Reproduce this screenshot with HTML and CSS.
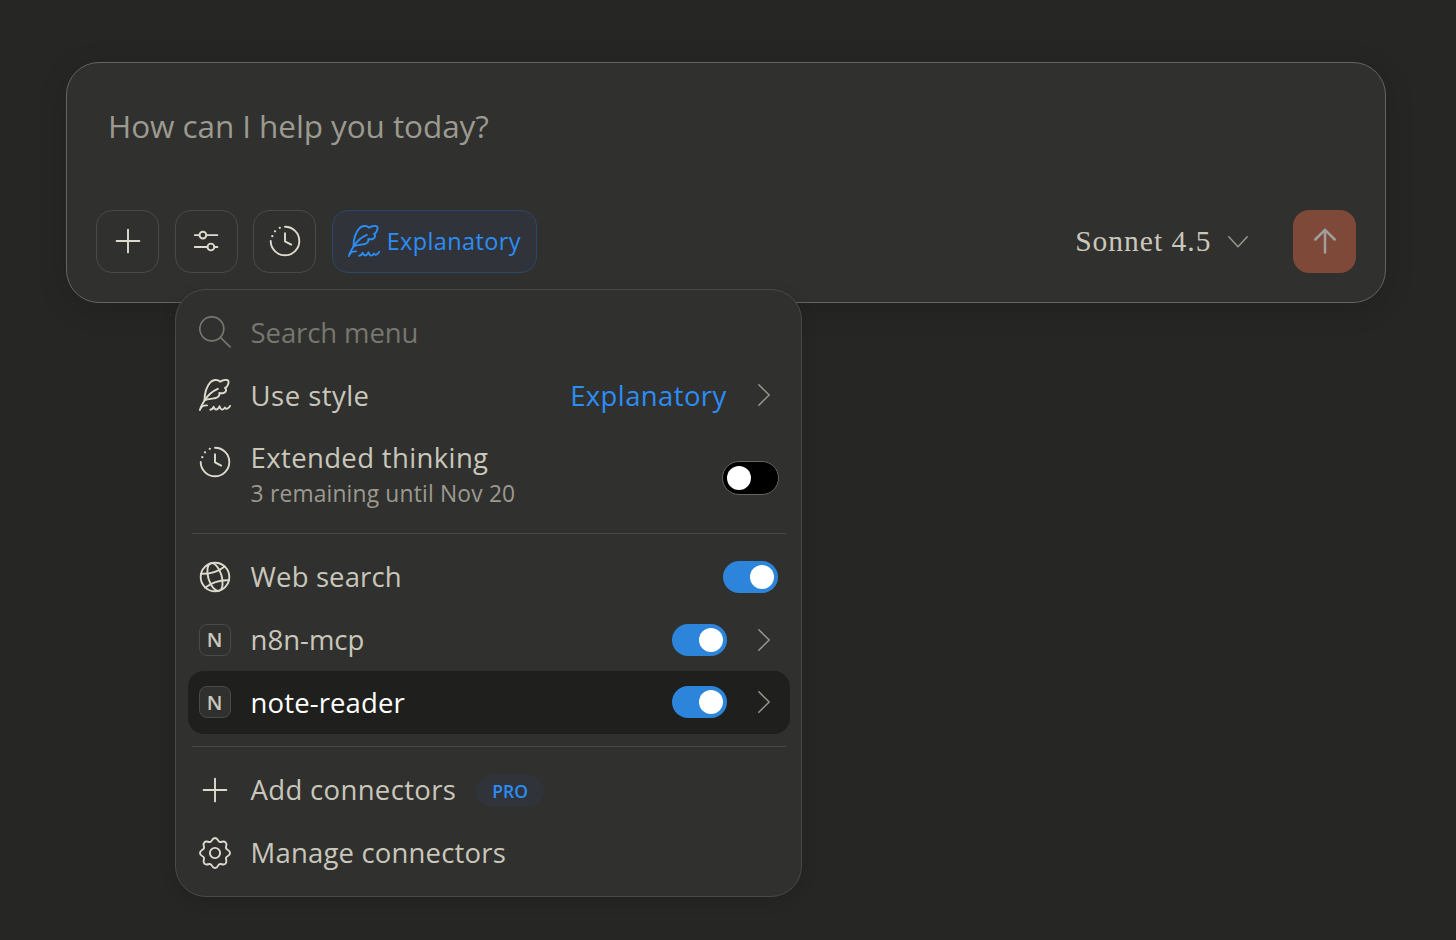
FILE: index.html
```
<!DOCTYPE html>
<html lang="en">
<head>
  <meta charset="UTF-8" />
  <meta name="viewport" content="width=device-width, initial-scale=1" />
  <title>New chat</title>
  <link rel="stylesheet" href="styles.css">
</head>
<body>
  <!-- icon sprite -->
  <svg class="sprite" width="0" height="0">
    <symbol id="i-plus" viewBox="0 0 32 32"><path d="M16 4.6v22.8M4.6 16h22.8" /></symbol>
    <symbol id="i-sliders" viewBox="0 0 32 32">
      <path d="M4.8 10.1h4.6M16.4 10.1h11M4.8 22h12.6M24.4 22h3" />
      <circle cx="12.9" cy="10.1" r="3.4" /><circle cx="20.9" cy="22" r="3.4" />
    </symbol>
    <symbol id="i-clock" viewBox="0 0 32 32">
      <path d="M16 1.7A14.3 14.3 0 1 1 1.7 16M16 8.2v8.2l6.2 3.2" />
      <path class="dots" d="M3.3 11.2h.01M6 6.3h.01M10.8 2.8h.01" />
    </symbol>
    <symbol id="i-feather" viewBox="0 0 32 32">
      <path d="M.9 31C2 27.5 3.500 24.500 5.500 21.500C8.500 16.500 13 12.300 18.800 9.800" />
      <path d="M5.500 21.300C5.600 14.500 7.500 7.500 11.300 3.300C13.500.9 18.500-.1 21 2.700C23 1.600 25.500.6 28 1C30.500 1.500 29.500 4.200 28.800 6C28.200 7.700 27.300 8.600 26 9C28 10.500 27 13.500 24.500 14C23 14.400 21.500 14.300 20.300 14C21 16.500 19 18.500 16 19.200C13 20.100 9 19.600 5.500 21.300" />
      <path d="M1.700 29C3 26.800 5.500 26.200 8 26.400M11.300 30.700C13.700 30.500 14 29.600 14.700 27.800C15.600 31.300 18.500 31.700 20.500 27.300C21.800 31.500 24.200 31.500 26 28.600C27 30.500 29.500 30 31.100 26.900" />
    </symbol>
    <symbol id="i-search" viewBox="0 0 32 32"><circle cx="12.800" cy="12.800" r="12" /><path d="M21.500 21.500l9.600 9.400" /></symbol>
    <symbol id="i-globe" viewBox="0 0 32 32">
      <circle cx="16" cy="16" r="14.300" />
      <g transform="rotate(-17 16 16)">
        <ellipse cx="16" cy="16" rx="6.700" ry="14.300" />
        <path d="M3.600 8.700Q16 13.300 28.400 8.700M3.600 23.300Q16 18.700 28.400 23.300" />
      </g>
    </symbol>
    <symbol id="i-gear" viewBox="-16 -16 32 32">
      <path d="M0-15C3.200-15 2.560-11.930 4.590-11.090C6.620-10.250 8.340-12.860 10.600-10.600C12.860-8.340 10.250-6.620 11.090-4.590C11.930-2.560 15-3.200 15 0C15 3.200 11.930 2.560 11.090 4.590C10.250 6.620 12.860 8.340 10.600 10.600C8.340 12.860 6.620 10.250 4.590 11.090C2.560 11.930 3.200 15 0 15C-3.200 15-2.560 11.930-4.590 11.090C-6.620 10.250-8.340 12.860-10.600 10.600C-12.860 8.340-10.250 6.620-11.090 4.590C-11.930 2.560-15 3.200-15 0C-15-3.200-11.930-2.560-11.090-4.590C-10.250-6.620-12.860-8.340-10.600-10.600C-8.340-12.860-6.620-10.250-4.590-11.090C-2.560-11.930-3.200-15 0-15Z" />
      <circle r="5.100" />
    </symbol>
    <symbol id="i-right" viewBox="0 0 12 22"><path d="M.8.8L11.200 11L.8 21.200" /></symbol>
    <symbol id="i-down" viewBox="0 0 20 12"><path d="M.8.800L10 10.800L19.200.8" /></symbol>
    <symbol id="i-up" viewBox="0 0 24 26"><path d="M12 24.500V1.800M2.300 11.500L12 1.800L21.700 11.500" /></symbol>
  </svg>

  <main class="composer">
    <div class="prompt"><span class="t-prompt">How can I help you today?</span></div>

    <div class="toolbar">
      <button class="tool"><svg class="icon"><use href="#i-plus" /></svg></button>

      <div class="tool-wrap">
        <button class="tool"><svg class="icon"><use href="#i-sliders" /></svg></button>

        <div class="menu">
          <div class="row search">
            <svg class="icon thin"><use href="#i-search" /></svg>
            <span class="label t-search">Search menu</span>
          </div>
          <div class="row">
            <svg class="icon"><use href="#i-feather" /></svg>
            <span class="label t-use">Use style</span>
            <span class="value">Explanatory</span>
            <svg class="chevron"><use href="#i-right" /></svg>
          </div>
          <div class="row tall">
            <svg class="icon"><use href="#i-clock" /></svg>
            <div class="label">
              <div class="t-extended">Extended thinking</div>
              <div class="hint">3 remaining until Nov 20</div>
            </div>
            <span class="toggle off"></span>
          </div>

          <hr>

          <div class="row">
            <svg class="icon"><use href="#i-globe" /></svg>
            <span class="label t-web">Web search</span>
            <span class="toggle"></span>
          </div>
          <div class="row">
            <span class="badge">N</span>
            <span class="label">n8n-mcp</span>
            <span class="toggle"></span>
            <svg class="chevron"><use href="#i-right" /></svg>
          </div>
          <div class="row active">
            <span class="badge">N</span>
            <span class="label t-note">note-reader</span>
            <span class="toggle"></span>
            <svg class="chevron"><use href="#i-right" /></svg>
          </div>

          <hr>

          <div class="row">
            <svg class="icon"><use href="#i-plus" /></svg>
            <span class="t-add">Add connectors</span>
            <span class="pro">PRO</span>
          </div>
          <div class="row">
            <svg class="icon"><use href="#i-gear" /></svg>
            <span class="label t-manage">Manage connectors</span>
          </div>
        </div>
      </div>

      <button class="tool"><svg class="icon"><use href="#i-clock" /></svg></button>
      <button class="tool style-pill"><svg class="icon"><use href="#i-feather" /></svg><span>Explanatory</span></button>

      <div class="model"><span>Sonnet 4.5</span><svg><use href="#i-down" /></svg></div>
      <button class="send"><svg><use href="#i-up" /></svg></button>
    </div>
  </main>
</body>
</html>
```

FILE: styles.css
```
* {
  box-sizing: border-box;
}
body {
  margin: 0;
  height: 940px;
  padding: 62px 70px 0 66px;
  overflow: hidden;
  background: #262624;
  color: #c9c7bb;
  font-family: 'Open Sans', 'Noto Sans', sans-serif;
  font-size: 27.5px;
}
button {
  margin: 0;
  padding: 0;
  background: none;
  color: inherit;
  font: inherit;
}
svg {
  display: block;
  flex: none;
  fill: none;
  stroke: currentColor;
  stroke-linecap: round;
  stroke-linejoin: round;
}
.sprite {
  position: absolute;
}
.composer {
  height: 241px;
  padding: 0 29px;
  background: #30302e;
  border: 1px solid #65645f;
  border-radius: 33px;
  box-shadow: 0 6px 30px rgba(0,0,0,0.14);
}
.prompt {
  height: 147px;
  padding: 41px 12px 0;
  color: #9c9a90;
  font-size: 31.5px;
  line-height: 44px;
  letter-spacing: -0.08px;
  white-space: nowrap;
}

/* toolbar */
.toolbar {
  display: flex;
  align-items: center;
  gap: 15.6px;
}
.tool {
  display: flex;
  align-items: center;
  justify-content: center;
  width: 63px;
  height: 63px;
  padding-bottom: 1px;
  border: 1px solid #4b4a47;
  border-radius: 16px;
  color: #e3e0d3;
}
.tool-wrap {
  position: relative;
}
.icon {
  width: 32px;
  height: 32px;
  color: #dedbce;
  stroke-width: 1.9;
}
.icon.thin {
  color: inherit;
  stroke-width: 1.7;
}
.dots {
  stroke-width: 2.3;
}
.style-pill {
  width: 205px;
  gap: 7px;
  background: #30343a;
  border-color: #2d4767;
  color: #2b8df5;
  font-size: 23.5px;
  letter-spacing: 0.38px;
}
.style-pill .icon {
  color: inherit;
}
.model {
  display: flex;
  align-items: center;
  gap: 17px;
  margin-left: auto;
  margin-right: 29px;
  font-family: 'Liberation Serif', serif;
  font-size: 29.5px;
  letter-spacing: 1px;
}
.model svg {
  width: 20px;
  height: 12px;
  color: #97958c;
  stroke-width: 1.5;
}
.send {
  display: flex;
  align-items: center;
  justify-content: center;
  width: 63px;
  height: 63px;
  border: 0;
  border-radius: 16px;
  background: #7e4939;
  color: #a09f9d;
}
.send svg {
  width: 24px;
  height: 26px;
  margin-bottom: 1px;
  stroke-width: 2.5;
}

/* dropdown */
.menu {
  position: absolute;
  top: 79px;
  left: 0;
  width: 627px;
  height: 608px;
  padding: 11px 11px 12px 12px;
  background: #30302e;
  border: 1px solid #4a4946;
  border-radius: 31px;
  box-shadow: 0 4px 16px rgba(0,0,0,0.12);
  white-space: nowrap;
}
.row {
  display: flex;
  align-items: center;
  height: 62.8px;
  padding: 0 12px 0 11px;
  border-radius: 16px;
}
.row > .icon,
.badge {
  margin-right: 20px;
}
.label {
  flex: 1;
}
.search {
  color: #77766f;
}
.tall {
  height: 94px;
  align-items: flex-start;
}
.tall .icon {
  margin-top: 19px;
}
.tall .label {
  line-height: 36px;
  padding-top: 13px;
}
.tall .toggle {
  margin-top: 34px;
}
.hint {
  color: #9c9a90;
  font-size: 22.8px;
  line-height: 35px;
  letter-spacing: 0.18px;
}
.value {
  color: #2b8df5;
  letter-spacing: 0.38px;
}
.t-search {
  letter-spacing: -0.1px;
}
.t-use {
  letter-spacing: 0.45px;
}
.t-extended {
  letter-spacing: 0.36px;
}
.t-web,
.t-note {
  letter-spacing: 0.12px;
}
.t-add {
  letter-spacing: 0.33px;
}
.t-manage {
  letter-spacing: 0.17px;
}
.chevron {
  width: 12px;
  height: 22px;
  margin-left: 31px;
  margin-right: 8px;
  color: #97958c;
  stroke-width: 1.5;
}
.toggle {
  display: flex;
  align-items: center;
  justify-content: flex-end;
  width: 55px;
  height: 32px;
  padding: 0 4px;
  border-radius: 16px;
  background: #2c84db;
}
.toggle::before {
  content: '';
  width: 24px;
  height: 24px;
  border-radius: 50%;
  background: #fff;
}
.toggle.off {
  justify-content: flex-start;
  width: 57px;
  height: 34px;
  margin-right: -1px;
  border: 1px solid #65645f;
  border-radius: 17px;
  background: #000;
}
hr {
  height: 1px;
  margin: 12px 4px 11.8px;
  border: 0;
  background: #4a4946;
}
.badge {
  display: flex;
  align-items: center;
  justify-content: center;
  width: 32px;
  height: 32px;
  border: 1px solid #4b4a47;
  border-radius: 8px;
  background: #30302e;
  font-size: 20px;
  font-weight: 600;
}
.active {
  background: #1f1f1d;
}
.active .label {
  color: #fff;
}
.pro {
  width: 68px;
  margin: 3px 0 0 20px;
  border-radius: 16px;
  background: #30343a;
  color: #2b8df5;
  font-size: 17.5px;
  font-weight: 600;
  line-height: 32px;
  text-align: center;
}
```
